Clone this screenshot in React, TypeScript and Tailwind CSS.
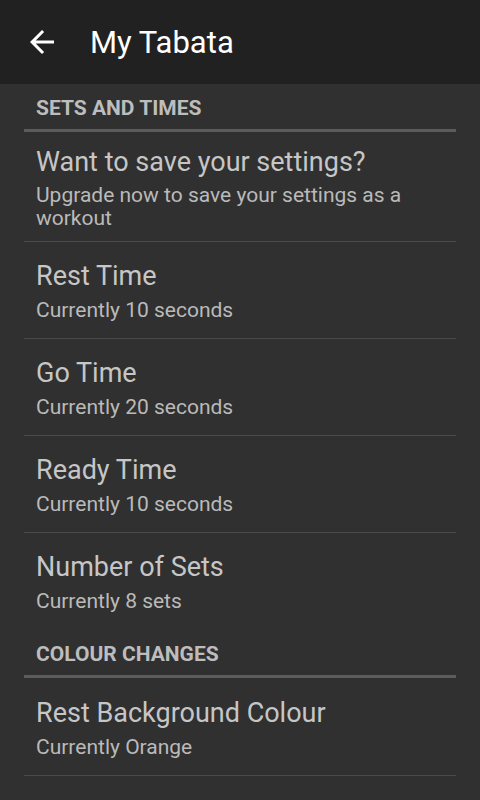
import React from "react";

const font = { fontFamily: "Roboto, 'Noto Sans', sans-serif" };

function SectionHeader({ label }: { label: string }) {
  return (
    <div className="px-[24px]">
      <div className="pt-[12px] pb-[9px] pl-[12px] text-[21px] leading-[24px] font-bold text-[#bdbdbd]">
        {label}
      </div>
      <div className="h-[3px] bg-[#5c5c5c]" />
    </div>
  );
}

function Row({
  title,
  summary,
  top,
  gap,
  bottom,
  divider = true,
}: {
  title: string;
  summary: string;
  top: string;
  gap: string;
  bottom: string;
  divider?: boolean;
}) {
  return (
    <div className="px-[24px]">
      <div className={`pl-[12px] pr-[12px] ${top} ${bottom}`}>
        <div className="text-[27px] leading-[32px] text-[#c6c6c6] whitespace-nowrap">{title}</div>
        <div className={`${gap} text-[21px] leading-[23px] text-[#bababa]`}>{summary}</div>
      </div>
      <div className={divider ? "h-[1px] bg-[#4a4a4a]" : "h-[1px]"} />
    </div>
  );
}

export default function App() {
  return (
    <div className="w-[480px] h-[800px] overflow-hidden bg-[#303030]" style={font}>
      <div className="h-[84px] bg-[#212121] flex items-center">
        <div className="w-[36px] h-[36px] ml-[24px] flex items-center justify-center">
          <svg width="36" height="36" viewBox="0 0 24 24" fill="#ffffff">
            <path d="M20 11H7.83l5.59-5.59L12 4l-8 8 8 8 1.41-1.41L7.83 13H20v-2z" />
          </svg>
        </div>
        <div className="ml-[30px] pt-[2px] text-[31px] leading-[36px] text-white">My Tabata</div>
      </div>

      <SectionHeader label="SETS AND TIMES" />
      <Row
        title="Want to save your settings?"
        summary="Upgrade now to save your settings as a workout"
        top="pt-[14px]"
        gap="mt-[6px]"
        bottom="pb-[11px]"
      />
      <Row title="Rest Time" summary="Currently 10 seconds" top="pt-[18px]" gap="mt-[7px]" bottom="pb-[16px]" />
      <Row title="Go Time" summary="Currently 20 seconds" top="pt-[18px]" gap="mt-[7px]" bottom="pb-[16px]" />
      <Row title="Ready Time" summary="Currently 10 seconds" top="pt-[18px]" gap="mt-[7px]" bottom="pb-[16px]" />
      <Row
        title="Number of Sets"
        summary="Currently 8 sets"
        top="pt-[18px]"
        gap="mt-[7px]"
        bottom="pb-[16px]"
        divider={false}
      />

      <SectionHeader label="COLOUR CHANGES" />
      <Row
        title="Rest Background Colour"
        summary="Currently Orange"
        top="pt-[19px]"
        gap="mt-[7px]"
        bottom="pb-[16px]"
      />
      <Row
        title="Go Background Colour"
        summary="Currently Green"
        top="pt-[21px]"
        gap="mt-[7px]"
        bottom="pb-[16px]"
      />
    </div>
  );
}
